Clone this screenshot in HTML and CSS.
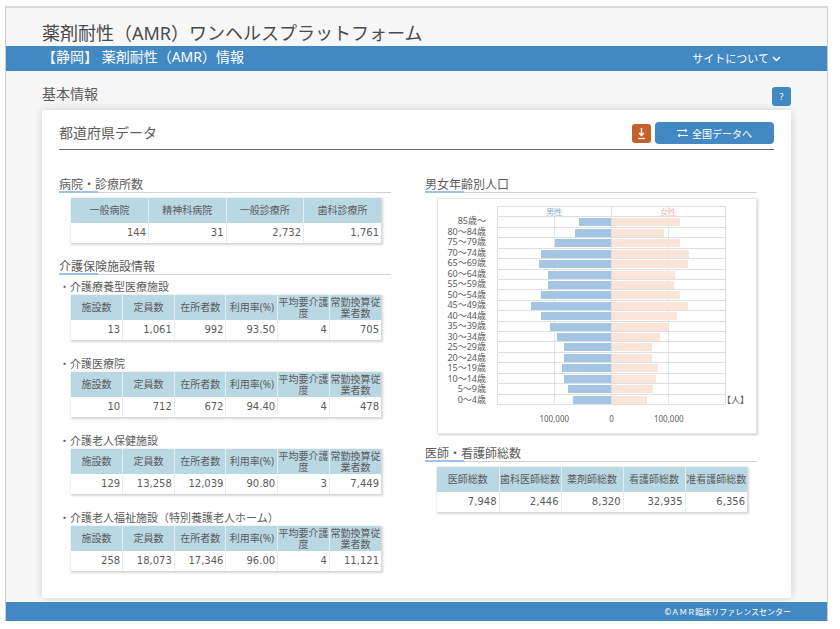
FILE: index.html
```html
<!DOCTYPE html>
<html lang="ja">
  <head>
    <meta charset="UTF-8" />
    <meta name="viewport" content="width=device-width, initial-scale=1.0" />
    <title>薬剤耐性（AMR）ワンヘルスプラットフォーム</title>
    <link rel="stylesheet" href="styles.css">
  </head>
  <body>
    <div class="page">
      <header>
        <h1>薬剤耐性（AMR）ワンヘルスプラットフォーム</h1>
        <nav>
          <h2>【静岡】 薬剤耐性（AMR）情報</h2>
          <button class="menu" type="button">
            サイトについて
            <svg width="9" height="6" viewBox="0 0 9 6" aria-hidden="true">
              <path d="M1 1l3.5 3.5L8 1" fill="none" stroke="currentColor" stroke-width="1.5" />
            </svg>
          </button>
        </nav>
      </header>

      <main>
        <div class="page-title">
          <h2>基本情報</h2>
          <button class="icon-button help" type="button">?</button>
        </div>

        <div class="card">
          <div class="card-header">
            <h3>都道府県データ</h3>
            <button class="icon-button download" type="button" aria-label="ダウンロード">
              <svg width="11" height="13" viewBox="0 0 11 13" aria-hidden="true">
                <path d="M5.5 1v7M3 6l2.5 2.5L8 6" fill="none" stroke="currentColor" stroke-width="1.4" />
                <path d="M2 11.5h7" stroke="currentColor" stroke-width="1.2" />
              </svg>
            </button>
            <button class="national" type="button">
              <svg width="11" height="8" viewBox="0 0 11 8" aria-hidden="true">
                <path d="M0 1.500h10M8 0l2 1.500-2 1.500M11 6.500H1M3 5L1 6.500 3 8" fill="none" stroke="currentColor" />
              </svg>
              全国データへ
            </button>
          </div>

          <div class="columns">
            <div class="column">
              <section>
                <h4>病院・診療所数</h4>
                <table>
                  <thead>
                    <tr><th>一般病院</th><th>精神科病院</th><th>一般診療所</th><th>歯科診療所</th></tr>
                  </thead>
                  <tbody>
                    <tr><td>144</td><td>31</td><td>2,732</td><td>1,761</td></tr>
                  </tbody>
                </table>
              </section>

              <section class="facilities">
                <h4>介護保険施設情報</h4>
                <h5>・介護療養型医療施設</h5>
                <table>
                  <thead>
                    <tr><th>施設数</th><th>定員数</th><th>在所者数</th><th>利用率(%)</th><th>平均要介護度</th><th>常勤換算従業者数</th></tr>
                  </thead>
                  <tbody>
                    <tr><td>13</td><td>1,061</td><td>992</td><td>93.50</td><td>4</td><td>705</td></tr>
                  </tbody>
                </table>
                <h5>・介護医療院</h5>
                <table>
                  <thead>
                    <tr><th>施設数</th><th>定員数</th><th>在所者数</th><th>利用率(%)</th><th>平均要介護度</th><th>常勤換算従業者数</th></tr>
                  </thead>
                  <tbody>
                    <tr><td>10</td><td>712</td><td>672</td><td>94.40</td><td>4</td><td>478</td></tr>
                  </tbody>
                </table>
                <h5>・介護老人保健施設</h5>
                <table>
                  <thead>
                    <tr><th>施設数</th><th>定員数</th><th>在所者数</th><th>利用率(%)</th><th>平均要介護度</th><th>常勤換算従業者数</th></tr>
                  </thead>
                  <tbody>
                    <tr><td>129</td><td>13,258</td><td>12,039</td><td>90.80</td><td>3</td><td>7,449</td></tr>
                  </tbody>
                </table>
                <h5>・介護老人福祉施設（特別養護老人ホーム）</h5>
                <table>
                  <thead>
                    <tr><th>施設数</th><th>定員数</th><th>在所者数</th><th>利用率(%)</th><th>平均要介護度</th><th>常勤換算従業者数</th></tr>
                  </thead>
                  <tbody>
                    <tr><td>258</td><td>18,073</td><td>17,346</td><td>96.00</td><td>4</td><td>11,121</td></tr>
                  </tbody>
                </table>
              </section>
            </div>

            <div class="column">
              <section class="population">
                <h4>男女年齢別人口</h4>
                <div class="chart">
                  <div class="ages">
                    <span></span>
                    <span>85歳～</span>
                    <span>80～84歳</span>
                    <span>75～79歳</span>
                    <span>70～74歳</span>
                    <span>65～69歳</span>
                    <span>60～64歳</span>
                    <span>55～59歳</span>
                    <span>50～54歳</span>
                    <span>45～49歳</span>
                    <span>40～44歳</span>
                    <span>35～39歳</span>
                    <span>30～34歳</span>
                    <span>25～29歳</span>
                    <span>20～24歳</span>
                    <span>15～19歳</span>
                    <span>10～14歳</span>
                    <span>5～9歳</span>
                    <span>0～4歳</span>
                  </div>
                  <div class="half male">
                    <span>男性</span>
                    <div><i style="width: 28%"></i></div>
                    <div><i style="width: 32%"></i></div>
                    <div><i style="width: 49%"></i></div>
                    <div><i style="width: 62%"></i></div>
                    <div><i style="width: 64%"></i></div>
                    <div><i style="width: 56%"></i></div>
                    <div><i style="width: 56%"></i></div>
                    <div><i style="width: 62%"></i></div>
                    <div><i style="width: 71%"></i></div>
                    <div><i style="width: 62%"></i></div>
                    <div><i style="width: 54%"></i></div>
                    <div><i style="width: 48%"></i></div>
                    <div><i style="width: 41%"></i></div>
                    <div><i style="width: 41%"></i></div>
                    <div><i style="width: 43%"></i></div>
                    <div><i style="width: 41%"></i></div>
                    <div><i style="width: 38%"></i></div>
                    <div><i style="width: 33%"></i></div>
                  </div>
                  <div class="half female">
                    <span>女性</span>
                    <div><i style="width: 60%"></i></div>
                    <div><i style="width: 46%"></i></div>
                    <div><i style="width: 60%"></i></div>
                    <div><i style="width: 68%"></i></div>
                    <div><i style="width: 67%"></i></div>
                    <div><i style="width: 56%"></i></div>
                    <div><i style="width: 55%"></i></div>
                    <div><i style="width: 60%"></i></div>
                    <div><i style="width: 67%"></i></div>
                    <div><i style="width: 58%"></i></div>
                    <div><i style="width: 50%"></i></div>
                    <div><i style="width: 43%"></i></div>
                    <div><i style="width: 36%"></i></div>
                    <div><i style="width: 36%"></i></div>
                    <div><i style="width: 41%"></i></div>
                    <div><i style="width: 39%"></i></div>
                    <div><i style="width: 37%"></i></div>
                    <div><i style="width: 31%"></i></div>
                  </div>
                  <div class="unit">【人】</div>
                  <div class="axis">
                    <span>100,000</span>
                    <span>0</span>
                    <span>100,000</span>
                  </div>
                </div>
              </section>

              <section>
                <h4>医師・看護師総数</h4>
                <table>
                  <thead>
                    <tr><th>医師総数</th><th>歯科医師総数</th><th>薬剤師総数</th><th>看護師総数</th><th>准看護師総数</th></tr>
                  </thead>
                  <tbody>
                    <tr><td>7,948</td><td>2,446</td><td>8,320</td><td>32,935</td><td>6,356</td></tr>
                  </tbody>
                </table>
              </section>
            </div>
          </div>
        </div>
      </main>

      <footer>©ＡＭＲ臨床リファレンスセンター</footer>
    </div>
  </body>
</html>
```

FILE: styles.css
```css
* {
  box-sizing: border-box;
}

body {
  margin: 0;
  padding: 6px 12px 8px 5px;
  background: #fff;
  color: #5c5c5c;
  font-family: "Noto Sans", "Noto Sans CJK JP", sans-serif;
  font-size: 10px;

  --blue: #4289c3;
  --head: #bad7e4;
  --line: #d0d2d4;
  --grid: #dddfe2;
}

h1,
h2,
h3,
h4,
h5 {
  margin: 0;
  font-weight: normal;
}

button {
  display: flex;
  align-items: center;
  justify-content: center;
  padding: 0;
  border: none;
  color: #fff;
  font-family: inherit;
  cursor: pointer;
}

.page {
  display: flex;
  flex-direction: column;
  min-height: calc(100vh - 14px);
  background: #f7f7f7;
  border: 1px solid #ccc;
  border-top: 2px solid #d8d8d8;
  border-bottom: none;
}

header h1 {
  padding: 12px 36px 0;
  font-size: 18px;
  line-height: 26px;
  color: #4a4a4a;
}

nav {
  display: flex;
  justify-content: space-between;
  height: 25px;
  padding: 0 46px 0 36px;
  background: var(--blue);
  color: #fff;
}
nav h2 {
  font-size: 14px;
  line-height: 22px;
}

.menu {
  gap: 3px;
  background: none;
  font-size: 11px;
  line-height: 22px;
}

main {
  flex: 1;
  padding: 14px 36px 3px;
}

.page-title {
  display: flex;
  align-items: flex-start;
  justify-content: space-between;
  height: 25px;
}
.page-title h2 {
  font-size: 14px;
  line-height: 18px;
}

.icon-button {
  width: 19px;
  height: 19px;
  border-radius: 3px;
}
.help {
  margin-top: 2px;
  background: var(--blue);
  font-size: 9px;
}
.download {
  background: #c4622e;
}

.card {
  padding: 12px 17px 27px;
  background: #fff;
  border-radius: 3px;
  box-shadow: 0 0 8px rgba(0, 0, 0, 0.16);
}

.card-header {
  display: flex;
  align-items: center;
  gap: 4px;
  padding-bottom: 5px;
  border-bottom: 1px solid #666;
}
.card-header h3 {
  flex: 1;
  font-size: 14px;
  line-height: 22px;
}

.national {
  gap: 4px;
  width: 119px;
  height: 22px;
  border-radius: 4px;
  background: var(--blue);
  font-size: 10px;
}

.columns {
  display: grid;
  grid-template-columns: 1fr 1fr;
  gap: 34px;
  padding: 25px 17px 0 0;
}

section {
  margin-bottom: 14px;
}
section:last-child {
  margin-bottom: 0;
}

h4 {
  position: relative;
  margin-bottom: 5px;
  padding-top: 3px;
  border-bottom: 1px solid var(--line);
  font-size: 12px;
  line-height: 14px;
}
/* blue start of the heading rule */
h4::after {
  content: "";
  position: absolute;
  left: 0;
  bottom: -1px;
  width: 39px;
  height: 2px;
  background: #9cc3e6;
}

h5 {
  padding-bottom: 2px;
  font-size: 11px;
  line-height: 13px;
}

table {
  width: calc(100% - 22px);
  margin-left: 12px;
  table-layout: fixed;
  border-collapse: collapse;
  box-shadow: 1px 1px 2px 1px rgba(0, 0, 0, 0.16);
}
th {
  height: 25px;
  padding: 0;
  background: var(--head);
  font-size: 10px;
  font-weight: normal;
  line-height: 11px;
}
td {
  height: 20px;
  padding: 0 2px;
  font-family: "DejaVu Sans", sans-serif;
  font-size: 10px;
  line-height: 12px;
  text-align: right;
}
th + th,
td + td {
  border-left: 1px solid #e4edf2;
}

.facilities h4 {
  margin-bottom: 5px;
}
.facilities table {
  margin-bottom: 17px;
}
.facilities table:last-child {
  margin-bottom: 0;
}

.population {
  margin-bottom: 10px;
}

.chart {
  display: grid;
  grid-template-columns: 48px 1fr 1fr 30px;
  margin-left: 12px;
  padding: 7px 0 9px;
  border: 1px solid #e8e8e8;
  box-shadow: 1px 1px 2px rgba(0, 0, 0, 0.2);
}

.ages,
.half {
  display: grid;
  grid-template-rows: repeat(19, 1fr);
  height: 199px;
}
.ages {
  font-size: 9px;
  line-height: 10px;
  text-align: right;
}

.half {
  border-right: 1px solid var(--grid);
  border-bottom: 1px solid var(--grid);
  background: linear-gradient(#e6e6e6, #e6e6e6) center / 1px 100% no-repeat;
}
.half > * {
  border-top: 1px solid var(--grid);
}
.half span {
  font-size: 8px;
  line-height: 9px;
  text-align: center;
}
.half div {
  display: flex;
  padding-top: 1px;
}
.half i {
  height: 8px;
}

.chart {
  grid-template-columns: 48px 11px 1fr 1fr 30px;
}
.ages {
  grid-column: 1;
}

.male {
  grid-column: 3;
  border-left: 1px solid var(--grid);
}
.male span {
  color: #7fb0e0;
}
.male div {
  justify-content: flex-end;
}
.male i {
  background: #a5c5e4;
}

.female span {
  color: #f5b8b8;
}
.female i {
  background: #fbe5d9;
}

.unit {
  align-self: end;
  margin-left: -4px;
  font-size: 9px;
  line-height: 11px;
  white-space: nowrap;
}

/* eight columns, so the ticks centre on each quarter of the plot */
.axis {
  grid-column: 3 / 5;
  display: grid;
  grid-template-columns: repeat(8, 1fr);
  margin-top: 8px;
  font-size: 8px;
  line-height: 11px;
  text-align: center;
}
.axis span {
  grid-column-end: span 2;
}
.axis span:first-child {
  grid-column-start: 2;
}

footer {
  padding: 0 36px;
  background: var(--blue);
  color: #fff;
  font-size: 8px;
  line-height: 19px;
  text-align: right;
}
```
